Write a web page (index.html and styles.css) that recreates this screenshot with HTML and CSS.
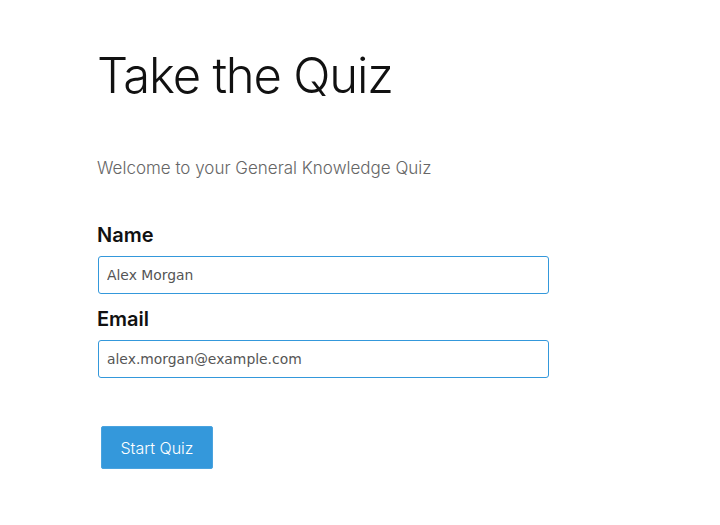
FILE: index.html
```html
<!DOCTYPE html>
<html lang="en">
<head>
    <meta charset="UTF-8">
    <meta name="viewport" content="width=device-width, initial-scale=1.0">
    <title>Take the Quiz</title>
    <link rel="stylesheet" href="styles.css">
</head>
<body>
    <main class="quiz">
        <h1 class="quiz-title">Take the Quiz</h1>
        <p class="quiz-intro">Welcome to your General Knowledge Quiz</p>

        <form class="quiz-form">
            <label class="field-label" for="name">Name</label>
            <input class="field-input" type="text" id="name" value="Alex Morgan">

            <label class="field-label" for="email">Email</label>
            <input class="field-input" type="email" id="email" value="alex.morgan@example.com">

            <button class="start-btn" type="button">Start Quiz</button>
        </form>
    </main>
</body>
</html>
```

FILE: styles.css
```css
*, *::after, *::before {
    box-sizing: border-box;
}

body {
    margin: 0;
    background: #fff;
    font-family: 'Inter', sans-serif;
    color: #111;
}

.quiz {
    padding: 45px 0 0 97px;
}

.quiz-title {
    margin: 0;
    font-size: 49px;
    font-weight: 300;
    letter-spacing: -1.2px;
    line-height: 62px;
}

.quiz-intro {
    margin: 51px 0 0;
    font-size: 17px;
    font-weight: 300;
    color: #666;
}

.quiz-form {
    display: flex;
    flex-direction: column;
    align-items: flex-start;
    margin-top: 44px;
}

.field-label {
    font-size: 20px;
    font-weight: 600;
    line-height: 26px;
    margin-bottom: 8px;
}

.field-input {
    width: 451px;
    height: 38px;
    margin: 0 0 12px 1px;
    padding: 0 8px;
    border: 1px solid #3498db;
    border-radius: 3px;
    font-family: 'DejaVu Sans', sans-serif;
    font-size: 13.9px;
    color: #555;
}

.start-btn {
    margin: 36px 0 0 4px;
    width: 112px;
    height: 43px;
    border: 1px solid #4aa3df;
    border-radius: 2px;
    background: #3498db;
    color: #fff;
    font-family: 'Inter', sans-serif;
    font-size: 16px;
    font-weight: 300;
}
```
